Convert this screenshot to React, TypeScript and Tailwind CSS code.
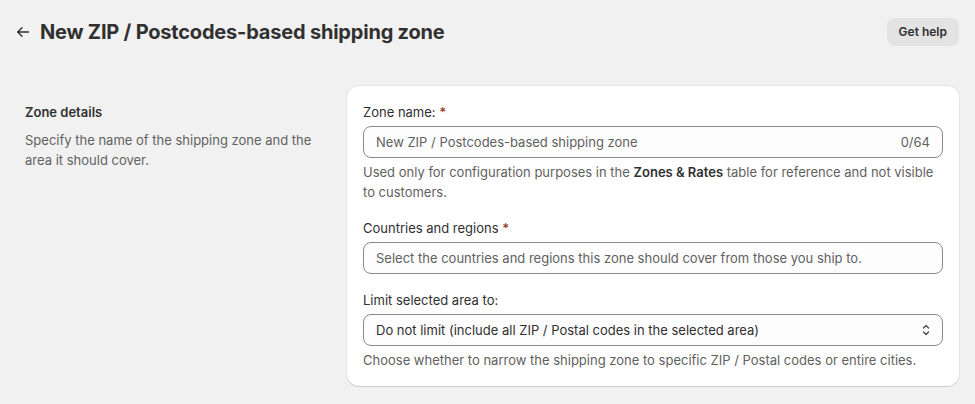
import React from "react";

const FONT = { fontFamily: "Inter, 'Noto Sans', sans-serif" };

function Required() {
  return <span className="text-[#8e1f0b] ml-1">*</span>;
}

function UpDownIcon() {
  return (
    <svg width="12" height="16" viewBox="0 0 12 16" fill="none" stroke="#4a4a4a" strokeWidth={1.4} strokeLinecap="round" strokeLinejoin="round">
      <path d="M3.5 6 6 3.5 8.5 6" />
      <path d="M3.5 10 6 12.5 8.5 10" />
    </svg>
  );
}

export default function App() {
  return (
    <div className="min-h-[404px] bg-[#f1f1f1] text-[#303030] px-4" style={FONT}>
      {/* header */}
      <div className="h-16 flex items-center justify-between">
        <div className="flex items-center gap-[10px]">
          <svg width="14" height="14" viewBox="0 0 14 14" fill="none" stroke="#303030" strokeWidth={1.4} strokeLinecap="round" strokeLinejoin="round">
            <path d="M12.5 7H1.8" />
            <path d="M6 2.8 1.8 7 6 11.2" />
          </svg>
          <h1 className="text-[20px] font-bold leading-7 tracking-[-0.2px]">New ZIP / Postcodes-based shipping zone</h1>
        </div>
        <button className="h-7 px-3 rounded-lg bg-[#e3e3e3] text-[12px] font-semibold text-[#303030]">Get help</button>
      </div>

      {/* section */}
      <div className="flex pt-[22px]">
        <div className="w-[331px] flex-none pl-[9px] pr-5 pt-4">
          <h2 className="text-[13px] font-semibold leading-5">Zone details</h2>
          <p className="mt-2 text-[13px] leading-5 text-[#616161]">
            Specify the name of the shipping zone and the area it should cover.
          </p>
        </div>

        <div className="flex-1 bg-white rounded-xl p-4 shadow-[0_1px_0_0_rgba(26,26,26,0.12),0_0_0_1px_rgba(26,26,26,0.05)] text-[13px] leading-5">
          <label className="block">
            Zone name:<Required />
          </label>
          <div className="mt-1 h-8 flex items-center justify-between px-3 rounded-lg border border-[#8a8a8a] bg-[#fdfdfd]">
            <span className="text-[#616161]">New ZIP / Postcodes-based shipping zone</span>
            <span className="text-[#616161]">0/64</span>
          </div>
          <p className="mt-1 text-[#616161]">
            Used only for configuration purposes in the <span className="font-semibold text-[#303030]">Zones &amp; Rates</span> table for reference and not visible to customers.
          </p>

          <label className="block mt-4">
            Countries and regions<Required />
          </label>
          <div className="mt-1 h-8 flex items-center px-3 rounded-lg border border-[#8a8a8a] bg-[#fdfdfd]">
            <span className="text-[#616161]">Select the countries and regions this zone should cover from those you ship to.</span>
          </div>

          <label className="block mt-4">Limit selected area to:</label>
          <div className="mt-1 h-8 flex items-center justify-between pl-3 pr-[10px] rounded-lg border border-[#8a8a8a] bg-[#fdfdfd]">
            <span>Do not limit (include all ZIP / Postal codes in the selected area)</span>
            <UpDownIcon />
          </div>
          <p className="mt-1 text-[#616161]">
            Choose whether to narrow the shipping zone to specific ZIP / Postal codes or entire cities.
          </p>
        </div>
      </div>
    </div>
  );
}
